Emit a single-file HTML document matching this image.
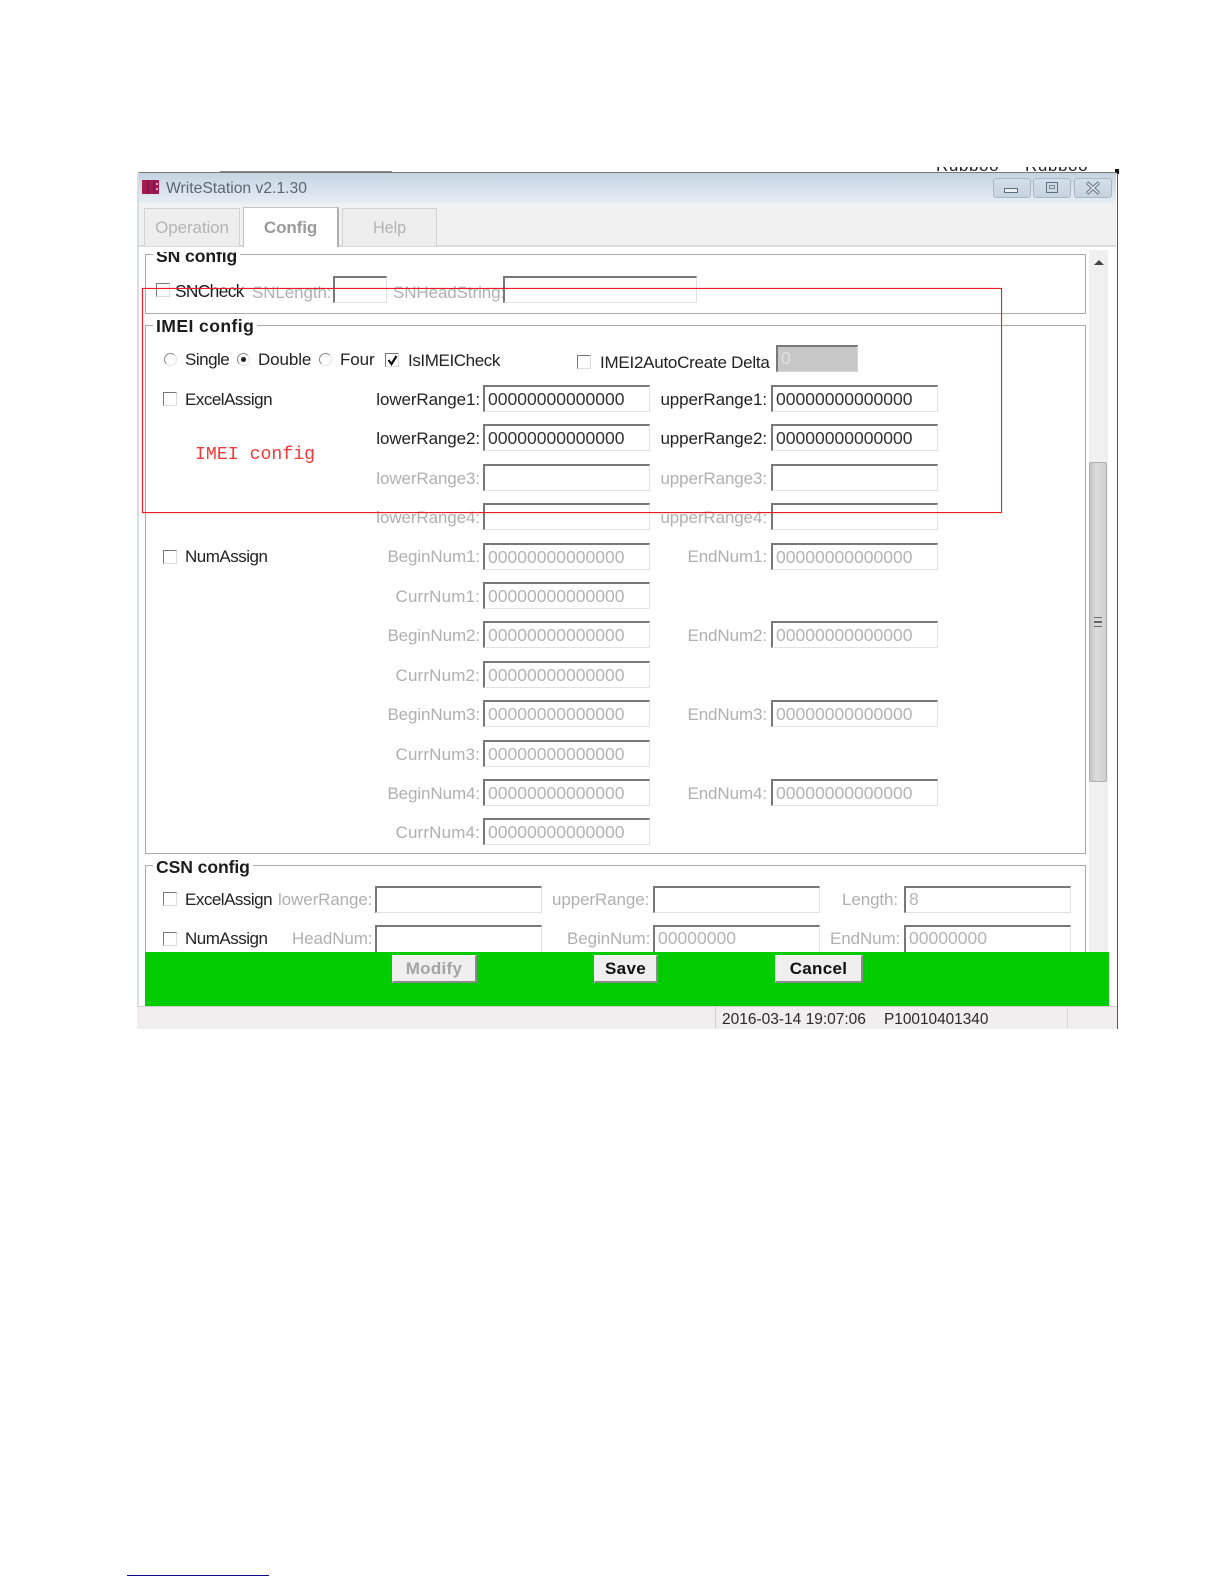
<!DOCTYPE html>
<html><head><meta charset="utf-8"><title>WriteStation</title>
<style>
html,body{margin:0;padding:0;background:#fff}
body{position:relative;width:1224px;height:1584px;overflow:hidden;font-family:"Liberation Sans",sans-serif;color:#222}
.a,.t,.l,.f,.c,.r,.g,.b{position:absolute;box-sizing:border-box}
.t,.l{white-space:nowrap;font-size:17px;line-height:20px;height:20px;letter-spacing:-.1px}
.n{letter-spacing:-.5px}
.l{left:280px;width:200px;text-align:right;margin-top:1px}
.l.u{left:567px}
.cn{letter-spacing:.15px}
.d{color:#b0b0b0}
.f{width:167px;height:27px;border:1px solid #e2e2e2;border-top:2px solid #787878;border-left:2px solid #787878;background:#fff;font-size:17.55px;line-height:23px;padding-left:3px;white-space:nowrap;color:#333}
.f.d{color:#b4b4b4}
.f.x{left:483px;line-height:25px}.f.y{left:771px;line-height:25px}
.c{width:14px;height:14px;border:1px solid #9a9a9a;border-right-color:#ddd;border-bottom-color:#ddd;background:#fff;border-top-color:#777;border-left-color:#777}
.r{width:13px;height:13px;border-radius:50%;border:1px solid #e4e4e4;border-top-color:#888;border-left-color:#888;background:#fff}
.g{left:145px;width:941px;border:1.5px solid #aaa;background:transparent}
.gt{position:absolute;left:153px;background:#fff;padding:0 3px;font-weight:bold;font-size:17.6px;line-height:20px;height:20px;white-space:nowrap;color:#1c1c1c;letter-spacing:-.1px}
.b{top:955px;height:28px;background:#efefef;border:1px solid #f4f4f4;border-right:2px solid #8a8a8a;border-bottom:2px solid #8a8a8a;font-weight:bold;font-size:17px;line-height:25px;text-align:center;letter-spacing:.3px;color:#111}
.tab{position:absolute;box-sizing:border-box;top:208px;height:38px;background:#eeeeee;border:1.5px solid #d2d2d2;border-bottom:none;text-align:center;font-size:17px;line-height:38px;color:#b4b4b4;letter-spacing:-.1px}
.wb{position:absolute;box-sizing:border-box;top:178px;height:20px;width:38px;border:1.5px solid #a9b8c6;border-radius:3px;background:linear-gradient(#d3e0ec,#c5d3df)}
</style></head><body>

<!-- clipped page fragments above the window -->
<div class="a" style="left:220px;top:171px;width:172px;height:1px;background:#8a8a8a"></div>
<div class="a" style="left:936px;top:167px;width:165px;height:5px;overflow:hidden">
  <div style="position:absolute;top:-11px;left:0;font-size:17px;line-height:20px;color:#222;white-space:nowrap;letter-spacing:.6px">Rubboo</div>
  <div style="position:absolute;top:-11px;left:89px;font-size:17px;line-height:20px;color:#222;white-space:nowrap;letter-spacing:.6px">Rubboo</div>
</div>
<div class="a" style="left:1115px;top:169px;width:4px;height:5px;background:#111"></div>

<!-- window -->
<div class="a" style="left:137px;top:172px;width:981px;height:857px;background:#fff;border-top:1.5px solid #777;border-right:1.5px solid #555;border-radius:3px 3px 0 0;overflow:hidden"></div>
<div class="a" style="left:137px;top:173px;width:979px;height:30px;background:linear-gradient(#c5d3e2,#dce6f0 70%,#e6ecf2)"></div>
<div class="a" style="left:137px;top:203px;width:979px;height:43px;background:#f1f1f1"></div>
<div class="a" style="left:137px;top:245px;width:979px;height:1.5px;background:#dcdcdc"></div>
<div class="a" style="left:137px;top:173px;width:1.5px;height:855px;background:#d8dee3"></div>

<!-- icon -->
<svg class="a" style="left:141px;top:179px" width="19" height="16" viewBox="0 0 19 16"><rect x="1" y="1" width="17" height="14" fill="#a8184e"/><rect x="6" y="1" width="1.5" height="14" fill="#4a2a5a"/><rect x="12" y="1" width="1.5" height="14" fill="#4a2a5a"/><rect x="15" y="4" width="2" height="2" fill="#e8b0c8"/><rect x="15" y="9" width="2" height="2" fill="#e8b0c8"/></svg>
<div class="t" style="left:166px;top:179px;font-size:15.7px;color:#5c6670;letter-spacing:0">WriteStation v2.1.30</div>

<!-- window buttons -->
<div class="wb" style="left:993px"></div><div class="a" style="left:1004px;top:188px;width:14px;height:5px;border:1.5px solid #5d6e7c;box-sizing:border-box;background:#e8eef3"></div>
<div class="wb" style="left:1033px"></div><div class="a" style="left:1046px;top:182px;width:12px;height:11px;border:1.5px solid #5d6e7c;box-sizing:border-box"></div><div class="a" style="left:1049px;top:185px;width:6px;height:4px;border:1.5px solid #7c8a96;box-sizing:border-box"></div>
<div class="wb" style="left:1074px"></div>
<svg class="a" style="left:1085px;top:181px" width="16" height="14" viewBox="0 0 16 14"><path d="M2 1.5L14 12.5M14 1.5L2 12.5" stroke="#6f7e8a" stroke-width="3.6" fill="none"/><path d="M2.5 2L13.5 12M13.5 2L2.5 12" stroke="#e2e9ef" stroke-width="1.4" fill="none"/></svg>

<!-- tabs -->
<div class="tab" style="left:144px;width:96px">Operation</div>
<div class="tab" style="left:243px;width:96px;top:207px;height:40px;background:#fff;font-weight:bold;color:#9a9a9a;border-color:#c4c4c4;border-right:2px solid #b0b0b0;line-height:40px;z-index:2">Config</div>
<div class="tab" style="left:342px;width:95px;font-size:16.3px">Help</div>

<!-- panel clip: SN config -->
<div class="a" style="left:137px;top:252px;width:950px;height:700px;overflow:hidden">
  <div class="a" style="left:8px;top:2px;width:941px;height:60px;border:1.5px solid #aaa"></div>
  <div class="gt" style="left:16px;top:-6px">SN config</div>
</div>

<div class="c" style="left:156px;top:283px"></div>
<div class="t" style="left:175px;top:281px;color:#1c1c1c;font-size:17.3px;letter-spacing:-.6px">SNCheck</div>
<div class="t d" style="left:252px;top:283px">SNLength:</div>
<div class="f" style="left:333px;top:276px;width:54px"></div>
<div class="t d" style="left:393px;top:283px">SNHeadString:</div>
<div class="f" style="left:503px;top:276px;width:194px"></div>

<!-- IMEI config -->
<div class="g" style="top:325px;height:529px"></div>
<div class="gt" style="top:316px;letter-spacing:.4px">IMEI config</div>

<div class="r" style="left:164px;top:353px"></div><div class="t n" style="left:185px;top:350px">Single</div>
<div class="r" style="left:237px;top:353px"></div><div class="a" style="left:241px;top:357px;width:5px;height:5px;border-radius:50%;background:#222"></div><div class="t" style="left:258px;top:350px">Double</div>
<div class="r" style="left:319px;top:353px"></div><div class="t" style="left:340px;top:350px">Four</div>
<div class="c" style="left:385px;top:353px"></div>
<svg class="a" style="left:386px;top:354px" width="13" height="13" viewBox="0 0 13 13"><path d="M2.5 6L5.5 10L10.5 2" stroke="#111" stroke-width="2.2" fill="none"/></svg>
<div class="t" style="left:408px;top:351px;letter-spacing:-.4px">IsIMEICheck</div>
<div class="c" style="left:577px;top:355px"></div>
<div class="t" style="left:600px;top:353px;letter-spacing:-.25px">IMEI2AutoCreate Delta</div>
<div class="f" style="left:776px;top:345px;width:82px;background:#c8c8c8;color:#e0e0e0;border-color:#d4d4d4;border-top-color:#787878;border-left-color:#787878">0</div>

<div class="c" style="left:163px;top:392px"></div><div class="t n" style="left:185px;top:390px">ExcelAssign</div>

<div class="l" style="top:389px">lowerRange1:</div><div class="f x" style="top:385px">00000000000000</div>
<div class="l u" style="top:389px">upperRange1:</div><div class="f y" style="top:385px">00000000000000</div>
<div class="l" style="top:428px">lowerRange2:</div><div class="f x" style="top:424px">00000000000000</div>
<div class="l u" style="top:428px">upperRange2:</div><div class="f y" style="top:424px">00000000000000</div>
<div class="l d" style="top:468px">lowerRange3:</div><div class="f x" style="top:464px"></div>
<div class="l u d" style="top:468px">upperRange3:</div><div class="f y" style="top:464px"></div>
<div class="l d" style="top:507px">lowerRange4:</div><div class="f x" style="top:503px"></div>
<div class="l u d" style="top:507px">upperRange4:</div><div class="f y" style="top:503px"></div>

<div class="t" style="left:195px;top:445px;font-family:'Liberation Mono',monospace;font-size:18.2px;color:#f23a3a;letter-spacing:0">IMEI config</div>

<div class="c" style="left:163px;top:550px"></div><div class="t n" style="left:185px;top:547px">NumAssign</div>

<div class="l d" style="top:546px">BeginNum1:</div><div class="f x d" style="top:543px">00000000000000</div>
<div class="l u d" style="top:546px">EndNum1:</div><div class="f y d" style="top:543px">00000000000000</div>
<div class="l d cn" style="top:586px">CurrNum1:</div><div class="f x d" style="top:582px">00000000000000</div>
<div class="l d" style="top:625px">BeginNum2:</div><div class="f x d" style="top:621px">00000000000000</div>
<div class="l u d" style="top:625px">EndNum2:</div><div class="f y d" style="top:621px">00000000000000</div>
<div class="l d cn" style="top:665px">CurrNum2:</div><div class="f x d" style="top:661px">00000000000000</div>
<div class="l d" style="top:704px">BeginNum3:</div><div class="f x d" style="top:700px">00000000000000</div>
<div class="l u d" style="top:704px">EndNum3:</div><div class="f y d" style="top:700px">00000000000000</div>
<div class="l d cn" style="top:744px">CurrNum3:</div><div class="f x d" style="top:740px">00000000000000</div>
<div class="l d" style="top:783px">BeginNum4:</div><div class="f x d" style="top:779px">00000000000000</div>
<div class="l u d" style="top:783px">EndNum4:</div><div class="f y d" style="top:779px">00000000000000</div>
<div class="l d cn" style="top:822px">CurrNum4:</div><div class="f x d" style="top:818px">00000000000000</div>

<!-- CSN config -->
<div class="g" style="top:865px;height:100px"></div>
<div class="gt" style="top:857px">CSN config</div>

<div class="c" style="left:163px;top:892px"></div><div class="t n" style="left:185px;top:890px">ExcelAssign</div>
<div class="t d" style="left:278px;top:890px">lowerRange:</div><div class="f" style="left:375px;top:886px"></div>
<div class="t d" style="left:552px;top:890px">upperRange:</div><div class="f" style="left:653px;top:886px"></div>
<div class="t d" style="left:842px;top:890px">Length:</div><div class="f d" style="left:904px;top:886px">8</div>

<div class="c" style="left:163px;top:932px"></div><div class="t n" style="left:185px;top:929px">NumAssign</div>
<div class="t d" style="left:292px;top:929px">HeadNum:</div><div class="f" style="left:375px;top:925px;height:30px"></div>
<div class="t d" style="left:567px;top:929px">BeginNum:</div><div class="f d" style="left:653px;top:925px;height:30px">00000000</div>
<div class="t d" style="left:830px;top:929px">EndNum:</div><div class="f d" style="left:904px;top:925px;height:30px">00000000</div>

<!-- scrollbar -->
<div class="a" style="left:1089px;top:250px;width:19px;height:702px;background:#f0f0f0"></div>
<svg class="a" style="left:1093px;top:259px" width="12" height="8" viewBox="0 0 12 8"><path d="M6 1L11 6H1Z" fill="#444"/></svg>
<div class="a" style="left:1089px;top:462px;width:18px;height:320px;background:linear-gradient(90deg,#c4c4c4,#dcdcdc 40%,#d0d0d0);border:1px solid #b0b0b0;border-radius:2px;box-sizing:border-box"></div>
<div class="a" style="left:1094px;top:617px;width:8px;height:10px;border-top:1px solid #666;border-bottom:1px solid #666;box-sizing:border-box"></div>
<div class="a" style="left:1094px;top:621px;width:8px;height:1.5px;background:#666"></div>

<!-- green bar -->
<div class="a" style="left:145px;top:952px;width:964px;height:54px;background:#00cc00"></div>
<div class="b" style="left:392px;width:85px;color:#a4a4a4">Modify</div>
<div class="b" style="left:594px;width:64px">Save</div>
<div class="b" style="left:775px;width:88px">Cancel</div>

<!-- status bar -->
<div class="a" style="left:137px;top:1006px;width:980px;height:23px;background:#f0eeee;border-top:1px solid #d0d0d0;box-sizing:border-box"></div>
<div class="a" style="left:715px;top:1007px;width:1px;height:21px;background:#cfcfcf"></div>
<div class="a" style="left:1067px;top:1007px;width:1px;height:21px;background:#d8d8d8"></div>
<div class="t" style="left:722px;top:1010px;font-size:15.5px;letter-spacing:0;color:#2a2a2a">2016-03-14 19:07:06</div>
<div class="t" style="left:884px;top:1010px;font-size:15.4px;letter-spacing:0;color:#2a2a2a">P10010401340</div>

<!-- red annotation rect -->
<div class="a" style="left:142px;top:288px;width:860px;height:225px;border:1px solid #ee1c22;box-shadow:0 0 1px rgba(238,50,50,.6);z-index:5"></div>

<!-- footnote line -->
<div class="a" style="left:127px;top:1575px;width:142px;height:1px;background:#0a0a8c"></div>
</body></html>
